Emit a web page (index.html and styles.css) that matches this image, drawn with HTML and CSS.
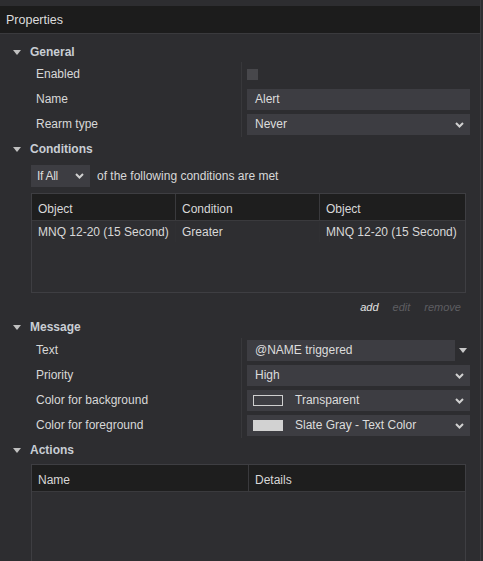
FILE: index.html
```html
<!DOCTYPE html>
<html>
<head>
    <meta charset="utf-8">
    <link rel="stylesheet" href="styles.css">
</head>
<body>
    <div class="panel">
        <div class="title">Properties</div>

        <div class="content">
            <!-- General -->
            <div class="section-head"><span class="caret"></span>General</div>
            <div class="props">
                <div class="prop">
                    <div class="prop-label">Enabled</div>
                    <div class="prop-value"><span class="checkbox"></span></div>
                </div>
                <div class="prop">
                    <div class="prop-label">Name</div>
                    <div class="prop-value"><div class="field">Alert</div></div>
                </div>
                <div class="prop">
                    <div class="prop-label">Rearm type</div>
                    <div class="prop-value">
                        <div class="field select">Never
                            <svg class="chev" width="9" height="6" viewBox="0 0 9 6"><polyline points="1,1 4.5,4.5 8,1" fill="none" stroke="#d0d0d0" stroke-width="2"/></svg>
                        </div>
                    </div>
                </div>
            </div>

            <!-- Conditions -->
            <div class="section-head"><span class="caret"></span>Conditions</div>
            <div class="cond-line">
                <div class="field select small">If All
                    <svg class="chev" width="9" height="6" viewBox="0 0 9 6"><polyline points="1,1 4.5,4.5 8,1" fill="none" stroke="#d0d0d0" stroke-width="2"/></svg>
                </div>
                <span>of the following conditions are met</span>
            </div>
            <div class="grid cond-grid">
                <div class="grid-head">
                    <div class="cell c1">Object</div>
                    <div class="cell c2">Condition</div>
                    <div class="cell c3">Object</div>
                </div>
                <div class="grid-row">
                    <div class="cell c1">MNQ 12-20 (15 Second)</div>
                    <div class="cell c2">Greater</div>
                    <div class="cell c3">MNQ 12-20 (15 Second)</div>
                </div>
            </div>
            <div class="links">
                <span class="link">add</span>
                <span class="link off">edit</span>
                <span class="link off">remove</span>
            </div>

            <!-- Message -->
            <div class="section-head"><span class="caret"></span>Message</div>
            <div class="props msg">
                <div class="prop">
                    <div class="prop-label">Text</div>
                    <div class="prop-value">
                        <div class="field combo">@NAME triggered</div>
                        <span class="drop"></span>
                    </div>
                </div>
                <div class="prop">
                    <div class="prop-label">Priority</div>
                    <div class="prop-value">
                        <div class="field select">High
                            <svg class="chev" width="9" height="6" viewBox="0 0 9 6"><polyline points="1,1 4.5,4.5 8,1" fill="none" stroke="#d0d0d0" stroke-width="2"/></svg>
                        </div>
                    </div>
                </div>
                <div class="prop">
                    <div class="prop-label">Color for background</div>
                    <div class="prop-value">
                        <div class="field select"><span class="swatch empty"></span>Transparent
                            <svg class="chev" width="9" height="6" viewBox="0 0 9 6"><polyline points="1,1 4.5,4.5 8,1" fill="none" stroke="#d0d0d0" stroke-width="2"/></svg>
                        </div>
                    </div>
                </div>
                <div class="prop">
                    <div class="prop-label">Color for foreground</div>
                    <div class="prop-value">
                        <div class="field select"><span class="swatch"></span>Slate Gray - Text Color
                            <svg class="chev" width="9" height="6" viewBox="0 0 9 6"><polyline points="1,1 4.5,4.5 8,1" fill="none" stroke="#d0d0d0" stroke-width="2"/></svg>
                        </div>
                    </div>
                </div>
            </div>

            <!-- Actions -->
            <div class="section-head"><span class="caret"></span>Actions</div>
            <div class="grid act-grid">
                <div class="grid-head">
                    <div class="cell a1">Name</div>
                    <div class="cell a2">Details</div>
                </div>
            </div>
        </div>
    </div>
</body>
</html>
```

FILE: styles.css
```css
body {
    margin: 0;
    background: #2d2d30;
    font-family: 'Liberation Sans', Arial, sans-serif;
    font-size: 12px;
    color: #d8d8d8;
    overflow: hidden;
}

.panel {
    width: 481px;
    height: 561px;
    padding-top: 6px;
    box-sizing: border-box;
    border-right: 1px solid #3b3b3f;
}

.title {
    height: 27px;
    line-height: 28px;
    padding-left: 6px;
    background: #1c1c1c;
    color: #dcdcdc;
    font-size: 12.5px;
    border-bottom: 1px solid #3a3a3d;
}

.content {
    padding-top: 8px;
}

.section-head {
    height: 20px;
    line-height: 20px;
    display: flex;
    align-items: center;
    font-weight: bold;
    color: #c9ced4;
}

.caret {
    width: 0;
    height: 0;
    margin: 0 9px 0 13px;
    border-left: 4px solid transparent;
    border-right: 4px solid transparent;
    border-top: 5px solid #c0c0c0;
}

.props {
    margin-bottom: 2px;
}

.props.msg {
    margin-top: 1px;
}

.prop {
    display: flex;
    height: 25px;
}

.prop-label {
    width: 205px;
    padding-left: 36px;
    line-height: 25px;
    border-right: 1px solid #38383b;
}

.prop-value {
    display: flex;
    align-items: center;
    padding-left: 5px;
}

.checkbox {
    width: 11px;
    height: 11px;
    background: #47474b;
}

.field {
    position: relative;
    width: 223px;
    height: 21px;
    line-height: 21px;
    padding-left: 8px;
    box-sizing: border-box;
    background: #3d3d42;
    color: #dcdcdc;
    display: flex;
    align-items: center;
}

.chev {
    position: absolute;
    right: 6px;
    top: 8px;
}

.field.combo {
    width: 208px;
}

.drop {
    margin-left: 4px;
    width: 0;
    height: 0;
    border-left: 4px solid transparent;
    border-right: 4px solid transparent;
    border-top: 5px solid #c8c8c8;
}

.swatch {
    width: 28px;
    height: 9px;
    margin: 0 12px 0 -2px;
    background: #d2d2d2;
    border: 1px solid #d2d2d2;
}

.swatch.empty {
    background: transparent;
    border-color: #cfcfcf;
}

.cond-line {
    display: flex;
    align-items: center;
    margin: 6px 0 0 31px;
    gap: 7px;
}

.field.small {
    width: 59px;
    height: 22px;
    padding-left: 6px;
    letter-spacing: -0.3px;
}

.grid {
    margin: 6px 0 0 31px;
    width: 435px;
    box-sizing: border-box;
    border: 1px solid #3e3e42;
    background: #2e2e31;
}

.cond-grid {
    height: 100px;
}

.act-grid {
    height: 120px;
    margin-top: 4px;
}

.grid-head {
    display: flex;
    height: 27px;
    padding-top: 3px;
    box-sizing: border-box;
    background: #1e1e1e;
    border-bottom: 1px solid #3a3a3d;
}

.grid-head .cell {
    margin-top: -3px;
    padding-top: 3px;
}

.grid-row {
    display: flex;
    height: 20px;
    margin-top: 1px;
}

.cell {
    padding-left: 6px;
    box-sizing: border-box;
    display: flex;
    align-items: center;
    white-space: nowrap;
}

.c1 { width: 144px; border-right: 1px solid #3a3a3d; }
.c2 { width: 144px; border-right: 1px solid #3a3a3d; }
.c3 { flex: 1; }

.grid-row .cell {
    border-right-color: #303033;
}

.a1 { width: 217px; border-right: 1px solid #3a3a3d; }
.a2 { flex: 1; }

.links {
    height: 20px;
    padding-top: 4px;
    display: flex;
    justify-content: flex-end;
    align-items: center;
    gap: 14px;
    padding-right: 19px;
    font-style: italic;
    font-size: 11px;
}

.link {
    color: #e4e4e4;
}

.link.off {
    color: #5e5e62;
}
```
